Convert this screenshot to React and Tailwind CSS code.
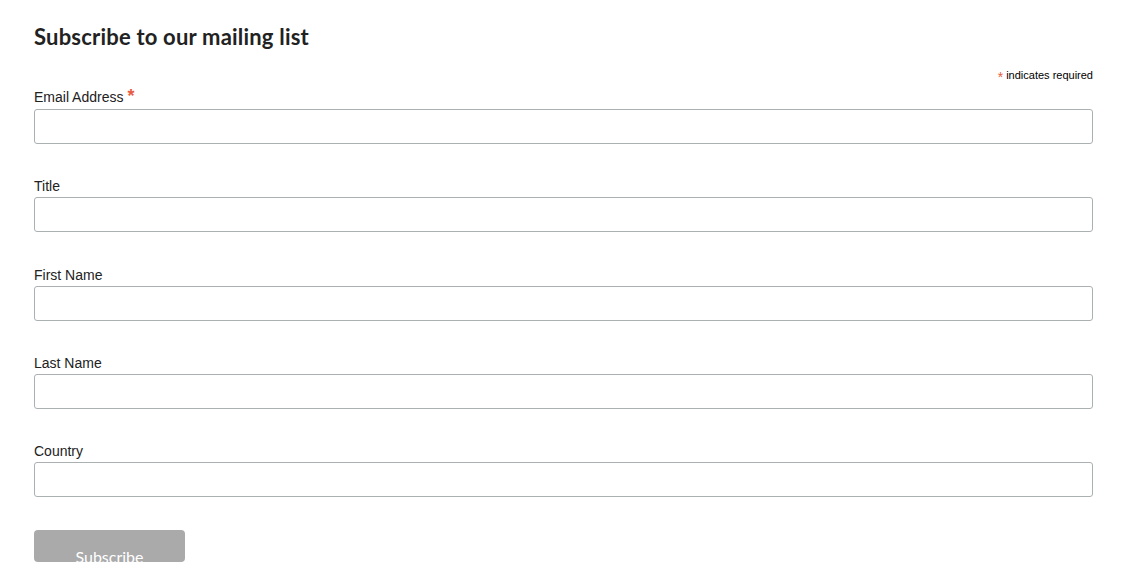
export default function App() {
  const fields = [
    { label: "Title", mt: "mt-[33px]" },
    { label: "First Name", mt: "mt-[34px]" },
    { label: "Last Name", mt: "mt-[33px]" },
    { label: "Country", mt: "mt-[33px]" },
  ];

  return (
    <div className="min-h-[582px] w-full bg-white font-['Liberation_Sans',Arial,sans-serif] text-[#222]">
      <div className="px-[34px] pt-[23px] w-[1127px]">
        <h2 className="font-['Lato',sans-serif] text-[22px] font-bold leading-[28px] text-[#222] tracking-[0.2px]">
          Subscribe to our mailing list
        </h2>

        <div className="mt-[17px] flex justify-end text-[11px] leading-[14px] text-black">
          <span className="text-[#e85c41] text-[14px] mr-[3px] leading-[14px] translate-y-[2px]">*</span>
          indicates required
        </div>

        <div className="mt-[5px]">
          <label className="block text-[14px] leading-[18px]">
            Email Address <span className="text-[#e85c41] text-[18px] font-bold">*</span>
          </label>
          <input
            type="email"
            className="mt-[3px] block w-full h-[35px] rounded-[3px] border border-[#abb0b2] bg-white px-2 outline-none"
          />
        </div>

        {fields.map((f) => (
          <div key={f.label} className={f.mt}>
            <label className="block text-[14px] leading-[18px]">{f.label}</label>
            <input
              type="text"
              className="mt-[2px] block w-full h-[35px] rounded-[3px] border border-[#abb0b2] bg-white px-2 outline-none"
            />
          </div>
        ))}

        <button className="mt-[33px] h-[32px] w-[151px] overflow-hidden rounded-[4px] bg-[#aaaaaa] pt-[16px] font-['Lato',sans-serif] text-[16px] leading-[22px] text-white">
          Subscribe
        </button>
      </div>
    </div>
  );
}
